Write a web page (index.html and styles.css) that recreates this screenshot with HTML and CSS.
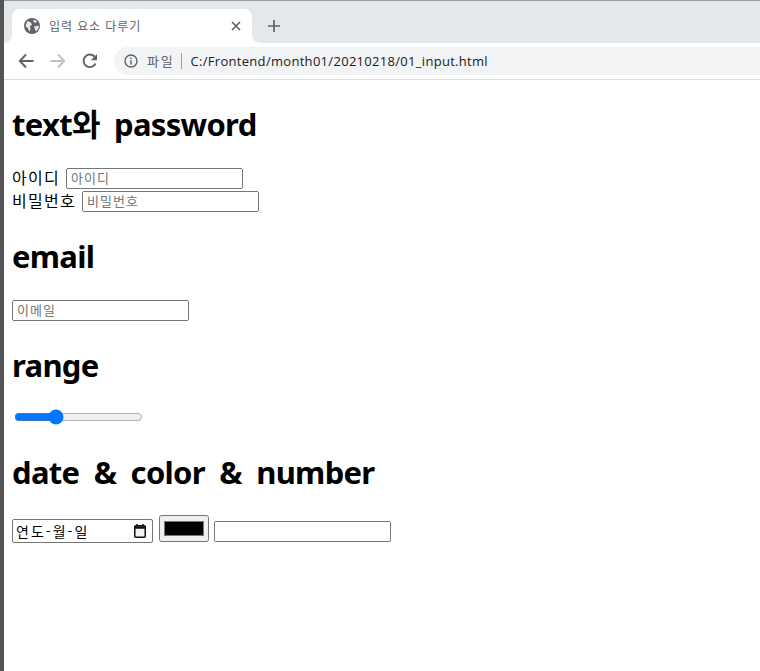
FILE: index.html
```html
<!DOCTYPE html>
<html lang="ko">
<head>
<meta charset="utf-8">
<title>입력 요소 다루기</title>
<link rel="stylesheet" href="styles.css">
</head>
<body>
<div class="window">
  <div class="tabstrip">
    <div class="tab">
      <svg class="globe" width="16" height="16" viewBox="0 0 16 16"><circle cx="8" cy="8" r="8" fill="#5f6368"/><path d="M3.500 3 7 4.500l1 2.500-2.200 1.200.8 2.600-1 3L4 10.500 1.500 8ZM9.500 1.500 13 3l-1.500 2-2-1ZM10 8.500l4.500-1 .3 2.500-2.800 3.500-1-2.200Z" fill="#e8eaed"/></svg>
      <span class="tab-title">입력 요소 다루기</span>
      <svg class="tab-close" width="10" height="10" viewBox="0 0 10 10"><path d="M1 1l8 8M9 1l-8 8" stroke="#5f6368" stroke-width="1.700"/></svg>
    </div>
    <svg class="newtab" width="12" height="12" viewBox="0 0 12 12"><path d="M6 0v12M0 6h12" stroke="#5f6368" stroke-width="1.700"/></svg>
  </div>
  <div class="toolbar">
    <svg class="nav" width="16" height="16" viewBox="0 0 16 16"><path d="M15.500 8H2M8 1.500 1.800 8 8 14.500" fill="none" stroke="#5f6368" stroke-width="1.900"/></svg>
    <svg class="nav" width="16" height="16" viewBox="0 0 16 16"><path d="M.5 8H14M8 1.500 14.200 8 8 14.500" fill="none" stroke="#bdc1c6" stroke-width="1.900"/></svg>
    <svg class="nav" width="16" height="16" viewBox="0 0 16 16"><path d="M13.600 10.500A6.300 6.300 0 1 1 12.500 3.500" fill="none" stroke="#5f6368" stroke-width="1.900"/><path d="M15 1v6.200H8.800Z" fill="#5f6368"/></svg>
    <div class="omnibox">
      <svg class="info" width="14" height="14" viewBox="0 0 14 14"><circle cx="7" cy="7" r="6" fill="none" stroke="#5f6368" stroke-width="1.400"/><path d="M7 6.200v4.300M7 3.500v1.500" stroke="#5f6368" stroke-width="1.500"/></svg>
      <span class="scheme">파일</span>
      <span class="divider"></span>
      <span class="url">C:/Frontend/month01/20210218/01_input.html</span>
    </div>
  </div>
  <main class="page">
    <h1>text와 password</h1>
    <div class="line"><label>아이디</label><input type="text" placeholder="아이디"></div>
    <div class="line"><label>비밀번호</label><input type="password" placeholder="비밀번호"></div>
    <h1>email</h1>
    <div class="line"><input type="email" placeholder="이메일"></div>
    <h1>range</h1>
    <div class="line range-line"><input type="range" min="0" max="100" value="30"></div>
    <h1>date &amp; color &amp; number</h1>
    <div class="line date-line">
      <div class="datefield"><span>연도-월-일</span>
        <svg width="12" height="14" viewBox="0 0 12 14"><path d="M3 0v2M9 0v2" stroke="#111" stroke-width="1.500"/><rect x=".75" y="1.750" width="10.500" height="11.500" rx="1" fill="#f4f4f4" stroke="#111" stroke-width="1.500"/><path d="M1 3.500h10" stroke="#111" stroke-width="2.500"/></svg>
      </div>
      <input type="color" class="color">
      <input type="number" class="number">
    </div>
  </main>
</div>
</body>
</html>
```
FILE: styles.css
```css
* { box-sizing: border-box; }
html, body { margin: 0; height: 100%; overflow: hidden; }
body { font-family: "Noto Sans", "Noto Sans CJK KR", sans-serif; color: #000; background: #fff; }
.window { display: flex; flex-direction: column; height: 671px; border-left: 4px solid #545454; }
.tabstrip { display: flex; align-items: flex-end; height: 43px; background: #e5e8eb; border-top: 1px solid #9a9c9e; padding-left: 8px; }
.tab { position: relative; display: flex; align-items: center; width: 240px; height: 34px; background: #fff; border-radius: 8px 8px 0 0; padding: 0 11px 0 12px; }
.tab::before, .tab::after { content: ""; position: absolute; bottom: 0; width: 8px; height: 8px; }
.tab::before { left: -8px; background: radial-gradient(circle at 0 0, #e5e8eb 7.500px, #fff 8px); }
.tab::after { right: -8px; background: radial-gradient(circle at 100% 0, #e5e8eb 7.500px, #fff 8px); }
.globe { flex: none; }
.tab-title { flex: 1; margin-left: 9px; padding-bottom: 2px; font-size: 12px; color: #5f6368; letter-spacing: .9px; font-family: "Noto Sans CJK KR", sans-serif; }
.newtab { flex: none; margin: 0 0 11px 16px; }
.toolbar { display: flex; align-items: center; height: 37px; padding: 0 0 1px 14px; gap: 16px; background: #fff; border-bottom: 1px solid #dadce0; }
.nav { flex: none; }
.omnibox { display: flex; align-items: center; flex: 1; height: 28px; padding-left: 10px; background: #f1f3f4; border-radius: 14px 0 0 14px; }
.scheme { margin-left: 9px; font-size: 13px; letter-spacing: 1.800px; color: #5f6368; font-family: "Noto Sans CJK KR", sans-serif; }
.divider { width: 1px; height: 16px; margin: 0 9px 0 6px; background: #9aa0a6; }
.url { font-size: 13px; color: #202124; font-family: "Open Sans", sans-serif; letter-spacing: .3px; }
.page { flex: 1; padding: 0 8px; }
h1 { margin: 21px 0; font-size: 31px; line-height: 44px; font-weight: 700; letter-spacing: -.7px; word-spacing: 7px; }
h1:first-child { margin-top: 22px; }
.line { display: flex; align-items: center; gap: 6px; height: 23px; font-size: 16px; line-height: 23px; font-family: "Noto Sans CJK KR", sans-serif; }
label { padding-bottom: 3px; letter-spacing: 1.280px; }
input { font-family: "Noto Sans CJK KR", sans-serif; letter-spacing: 1px; }
input[type=text], input[type=password], input[type=email], input[type=number] { width: 177px; height: 21px; padding: 0 3px 2px; font-size: 13px; line-height: 17px; }
.range-line { align-items: flex-start; height: 21px; }
.range-line input { margin: 1px 0 0 2px; }
.date-line { align-items: flex-end; height: 28px; }
.color { margin: 0 -1px 1px 0; }
.number { margin: 0 0 1px; }
.datefield { display: flex; align-items: center; justify-content: space-between; width: 141px; height: 24px; padding: 0 6px 0 3px; border: 1px solid #767676; border-radius: 2px; font-size: 14px; line-height: 17px; letter-spacing: 2px; }
```
